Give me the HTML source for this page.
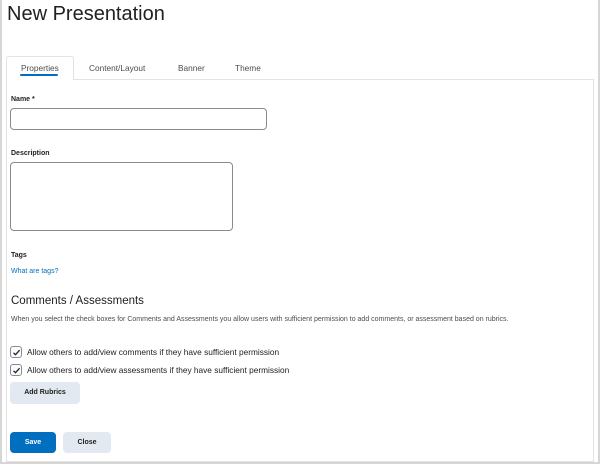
<!DOCTYPE html>
<html><head><style>
*{margin:0;padding:0;box-sizing:border-box}
body{width:600px;height:465px;background:#fff;font-family:"Liberation Sans",sans-serif;color:#202122;position:relative;overflow:hidden}
.a{position:absolute}
.outer{left:0;top:-2px;width:600px;height:466px;border:2px solid #d6d6d6}
.panel{left:6px;top:79px;width:588px;height:383px;border:1px solid #e3e3e3;border-top:1px solid #e3e3e3}
.tab{left:6px;top:56px;width:68px;height:24px;border:1px solid #e3e3e3;border-bottom:none;background:#fff;border-radius:3px 3px 0 0}
.t{font-size:8.3px;color:#494c4e}
.lbl{font-size:7px;font-weight:bold;color:#202122}
.inp{border:1px solid #868c8f;border-radius:4px;background:#fff}
.cb{width:12px;height:12px;border:1px solid #868c8f;border-radius:3px;background:#f9fbff}
.btn{border-radius:4px;font-size:7px;font-weight:bold;text-align:center}
</style></head><body>
<div class="a outer"></div>
<div class="a" style="left:7px;top:3px;font-size:20px;color:#202122">New Presentation</div>
<div class="a panel"></div>
<div class="a tab"></div>
<div class="a t" style="left:21px;top:63px">Properties</div>
<div class="a" style="left:20px;top:74px;width:38px;height:2px;background:#006fbf;border-radius:1px"></div>
<div class="a t" style="left:89px;top:63px">Content/Layout</div>
<div class="a t" style="left:178px;top:63px">Banner</div>
<div class="a t" style="left:235px;top:63px">Theme</div>
<div class="a lbl" style="left:11px;top:96px">Name *</div>
<div class="a inp" style="left:10px;top:108px;width:257px;height:22px"></div>
<div class="a lbl" style="left:11px;top:150px">Description</div>
<div class="a inp" style="left:10px;top:162px;width:223px;height:69px"></div>
<div class="a lbl" style="left:11px;top:252px">Tags</div>
<div class="a" style="left:11px;top:268px;font-size:7px;color:#006fbf">What are tags?</div>
<div class="a" style="left:11px;top:295px;font-size:11.5px;color:#202122">Comments / Assessments</div>
<div class="a" style="left:11px;top:316px;font-size:7px;color:#494c4e;white-space:nowrap">When you select the check boxes for Comments and Assessments you allow users with sufficient permission to add comments, or assessment based on rubrics.</div>
<div class="a cb" style="left:10px;top:346px"></div>
<svg class="a" style="left:12px;top:348px" width="9" height="9" viewBox="0 0 9 9"><path d="M1.5 4.8L3.5 6.7L7.6 2.2" fill="none" stroke="#202122" stroke-width="1.3"/></svg>
<div class="a" style="left:27px;top:347px;font-size:8.3px;color:#202122">Allow others to add/view comments if they have sufficient permission</div>
<div class="a cb" style="left:10px;top:364px"></div>
<svg class="a" style="left:12px;top:366px" width="9" height="9" viewBox="0 0 9 9"><path d="M1.5 4.8L3.5 6.7L7.6 2.2" fill="none" stroke="#202122" stroke-width="1.3"/></svg>
<div class="a" style="left:27px;top:365px;font-size:8.3px;color:#202122">Allow others to add/view assessments if they have sufficient permission</div>
<div class="a btn" style="left:10px;top:382px;width:70px;height:22px;line-height:22px;background:#e3e9f1;color:#202122">Add Rubrics</div>
<div class="a btn" style="left:10px;top:432px;width:46px;height:21px;line-height:21px;background:#006fbf;color:#fff">Save</div>
<div class="a btn" style="left:63px;top:432px;width:48px;height:21px;line-height:21px;background:#e3e9f1;color:#202122">Close</div>
</body></html>
